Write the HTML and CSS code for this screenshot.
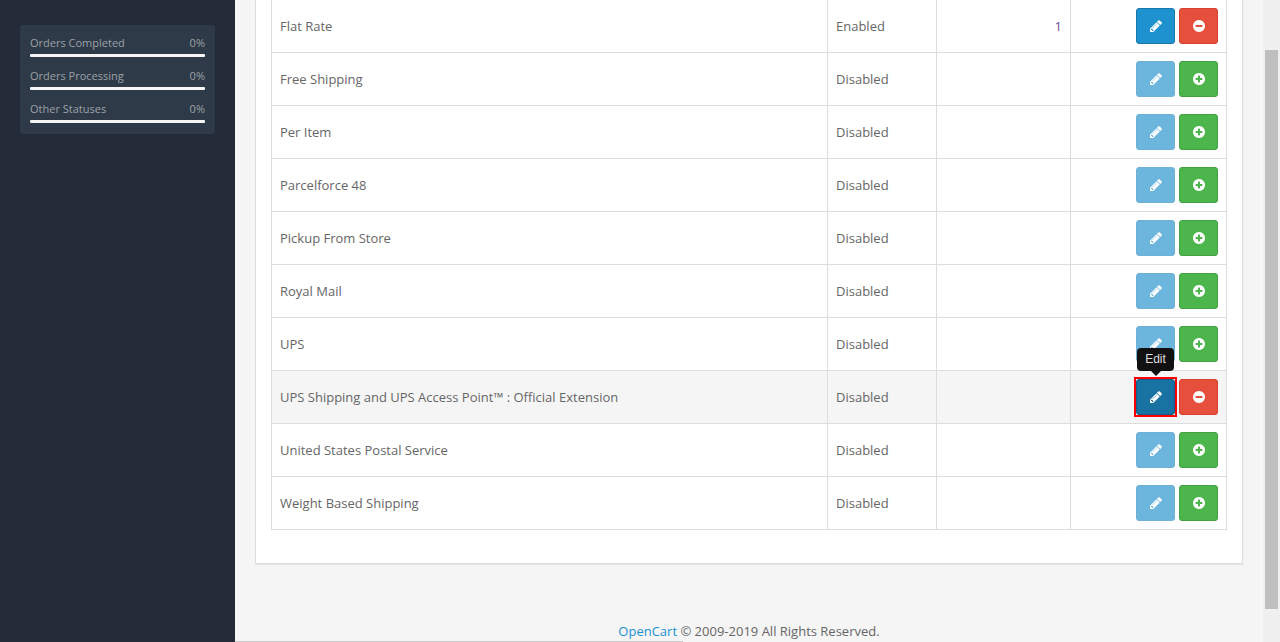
FILE: index.html
```html
<!DOCTYPE html>
<html lang="en">
<head>
<meta charset="utf-8">
<title>Shipping</title>
<link rel="stylesheet" href="styles.css">
</head>
<body>
<svg class="defs" width="0" height="0">
  <symbol id="i-pencil" viewBox="0 0 1792 1792"><path d="M491 1536l91-91-235-235-91 91v107h128v128h107zm523-928q0-22-22-22-10 0-17 7l-542 542q-7 7-7 17 0 22 22 22 10 0 17-7l542-542q7-7 7-17zm-54-192l416 416-832 832h-416v-416zm683 96q0 53-37 90l-166 166-416-416 166-165q36-38 90-38 53 0 91 38l235 234q37 39 37 91z"/></symbol>
  <symbol id="i-plus" viewBox="0 0 1792 1792"><path d="M1344 960v-128q0-26-19-45t-45-19h-256v-256q0-26-19-45t-45-19h-128q-26 0-45 19t-19 45v256h-256q-26 0-45 19t-19 45v128q0 26 19 45t45 19h256v256q0 26 19 45t45 19h128q26 0 45-19t19-45v-256h256q26 0 45-19t19-45zm320-64q0 209-103 385.5t-279.5 279.5-385.5 103-385.5-103-279.5-279.5-103-385.5 103-385.5 279.5-279.5 385.5-103 385.5 103 279.5 279.5 103 385.5z"/></symbol>
  <symbol id="i-minus" viewBox="0 0 1792 1792"><path d="M1344 960v-128q0-26-19-45t-45-19h-768q-26 0-45 19t-19 45v128q0 26 19 45t45 19h768q26 0 45-19t19-45zm320-64q0 209-103 385.5t-279.5 279.5-385.5 103-385.5-103-279.5-279.5-103-385.5 103-385.5 279.5-279.5 385.5-103 385.5 103 279.5 279.5 103 385.5z"/></symbol>
</svg>
<div class="app">
  <aside class="sidebar">
    <div class="stats">
      <div class="stat"><div class="stat-head"><span>Orders Completed</span><span>0%</span></div><div class="stat-bar"></div></div>
      <div class="stat"><div class="stat-head"><span>Orders Processing</span><span>0%</span></div><div class="stat-bar"></div></div>
      <div class="stat"><div class="stat-head"><span>Other Statuses</span><span>0%</span></div><div class="stat-bar"></div></div>
    </div>
  </aside>
  <main class="content">
    <section class="panel">
      <table class="list">
        <tbody>
          <tr class="first"><td class="c-name">Flat Rate</td><td class="c-status">Enabled</td><td class="c-order">1</td><td class="c-act"><div class="acts"><a class="btn edit"><svg class="ico"><use href="#i-pencil"/></svg></a><a class="btn remove"><svg class="ico"><use href="#i-minus"/></svg></a></div></td></tr>
          <tr><td class="c-name">Free Shipping</td><td class="c-status">Disabled</td><td class="c-order"></td><td class="c-act"><div class="acts"><a class="btn edit off"><svg class="ico"><use href="#i-pencil"/></svg></a><a class="btn install"><svg class="ico"><use href="#i-plus"/></svg></a></div></td></tr>
          <tr><td class="c-name">Per Item</td><td class="c-status">Disabled</td><td class="c-order"></td><td class="c-act"><div class="acts"><a class="btn edit off"><svg class="ico"><use href="#i-pencil"/></svg></a><a class="btn install"><svg class="ico"><use href="#i-plus"/></svg></a></div></td></tr>
          <tr><td class="c-name">Parcelforce 48</td><td class="c-status">Disabled</td><td class="c-order"></td><td class="c-act"><div class="acts"><a class="btn edit off"><svg class="ico"><use href="#i-pencil"/></svg></a><a class="btn install"><svg class="ico"><use href="#i-plus"/></svg></a></div></td></tr>
          <tr><td class="c-name">Pickup From Store</td><td class="c-status">Disabled</td><td class="c-order"></td><td class="c-act"><div class="acts"><a class="btn edit off"><svg class="ico"><use href="#i-pencil"/></svg></a><a class="btn install"><svg class="ico"><use href="#i-plus"/></svg></a></div></td></tr>
          <tr><td class="c-name">Royal Mail</td><td class="c-status">Disabled</td><td class="c-order"></td><td class="c-act"><div class="acts"><a class="btn edit off"><svg class="ico"><use href="#i-pencil"/></svg></a><a class="btn install"><svg class="ico"><use href="#i-plus"/></svg></a></div></td></tr>
          <tr><td class="c-name">UPS</td><td class="c-status">Disabled</td><td class="c-order"></td><td class="c-act"><div class="acts"><a class="btn edit off"><svg class="ico"><use href="#i-pencil"/></svg></a><a class="btn install"><svg class="ico"><use href="#i-plus"/></svg></a></div></td></tr>
          <tr class="hover"><td class="c-name">UPS Shipping and UPS Access Point™ : Official Extension</td><td class="c-status">Disabled</td><td class="c-order"></td><td class="c-act"><div class="acts"><a class="btn edit focus"><svg class="ico"><use href="#i-pencil"/></svg><span class="tip">Edit</span></a><a class="btn remove"><svg class="ico"><use href="#i-minus"/></svg></a></div></td></tr>
          <tr><td class="c-name">United States Postal Service</td><td class="c-status">Disabled</td><td class="c-order"></td><td class="c-act"><div class="acts"><a class="btn edit off"><svg class="ico"><use href="#i-pencil"/></svg></a><a class="btn install"><svg class="ico"><use href="#i-plus"/></svg></a></div></td></tr>
          <tr><td class="c-name">Weight Based Shipping</td><td class="c-status">Disabled</td><td class="c-order"></td><td class="c-act"><div class="acts"><a class="btn edit off"><svg class="ico"><use href="#i-pencil"/></svg></a><a class="btn install"><svg class="ico"><use href="#i-plus"/></svg></a></div></td></tr>
        </tbody>
      </table>
    </section>
    <footer class="foot"><a class="foot-link">OpenCart</a> © 2009-2019 All Rights Reserved.</footer>
    <div class="foot-line"></div>
  </main>
  <div class="scrollbar"><div class="thumb"></div></div>
</div>
</body>
</html>
```
FILE: styles.css
```css
* { box-sizing: border-box; }
html, body { margin: 0; height: 642px; overflow: hidden; }
body { font-family: "Open Sans", sans-serif; font-size: 13px; color: #666; background: #f5f5f5; }
.defs { display: block; height: 0; }
.app { display: flex; height: 642px; }

.sidebar { width: 235px; flex: none; background: #232b38; padding: 25px 20px 0; }
.stats { background: #2e3a48; border-radius: 3px; padding: 10px 10px 0; font-size: 11px; color: #9ca1a6; height: 109px; display: flex; flex-direction: column; gap: 11px; }
.stat { flex: none; height: 22px; }
.stat-head { display: flex; justify-content: space-between; height: 16px; line-height: 16px; }
.stat-bar { height: 3px; margin-top: 3px; background: #f5f5f5; border-radius: 1px; }

.content { flex: 1; min-width: 0; display: flex; flex-direction: column; }
.panel { width: 988px; margin-left: 20px; height: 564px; background: #fff; border: 1px solid #ddd; border-top: 0; box-shadow: 0 1px 1px rgba(0, 0, 0, .06); padding: 0 15px; }
.list { width: 955px; border-collapse: collapse; table-layout: fixed; border: 1px solid #ddd; border-top: 0; }
.list td { height: 53px; padding: 0 8px; border: 1px solid #ddd; vertical-align: middle; }
.list tr.first td { height: 52px; border-top: 0; }
.hover td { background: #f5f5f5; }
.c-name { width: 556px; }
.c-status { width: 109px; }
.c-order { width: 134px; text-align: right; color: #6b4a9c; }
.c-act { width: 156px; }
.acts { display: flex; justify-content: flex-end; gap: 4px; }

.btn { position: relative; display: flex; align-items: center; justify-content: center; width: 39px; height: 36px; border: 1px solid; border-radius: 3px; color: #fff; }
.ico { width: 14px; height: 14px; fill: #fff; }
.edit { background: #1e91cf; border-color: #1978ab; }
.edit.off { background: #6cb5dd; border-color: #6fb0d6; }
.edit.focus { background: #1872a2; border-color: #145d85; }
.edit.focus::before { content: ""; position: absolute; inset: -3px; border: 2px solid #ff0000; }
.remove { background: #e74f3d; border-color: #d9402e; }
.install { background: #4cb64c; border-color: #43a143; }

.tip { position: absolute; left: 0; bottom: 43px; width: 37px; height: 23px; background: #111; color: #ddd; border-radius: 4px; font: 12px/23px "Liberation Sans", sans-serif; text-align: center; }
.tip::after { content: ""; position: absolute; left: 14px; top: 23px; border: 5px solid transparent; border-top-color: #111; border-bottom: 0; }

.foot { margin-top: 58px; height: 19px; line-height: 18px; text-align: center; width: 1028px; }
.foot-link { color: #1e91cf; }
.foot-line { width: 448px; height: 1px; background: #ccc; }

.scrollbar { width: 17px; flex: none; background: #f0f0f0; padding: 50px 2px 0; }
.thumb { width: 13px; height: 559px; background: #bfbfbf; }
```
